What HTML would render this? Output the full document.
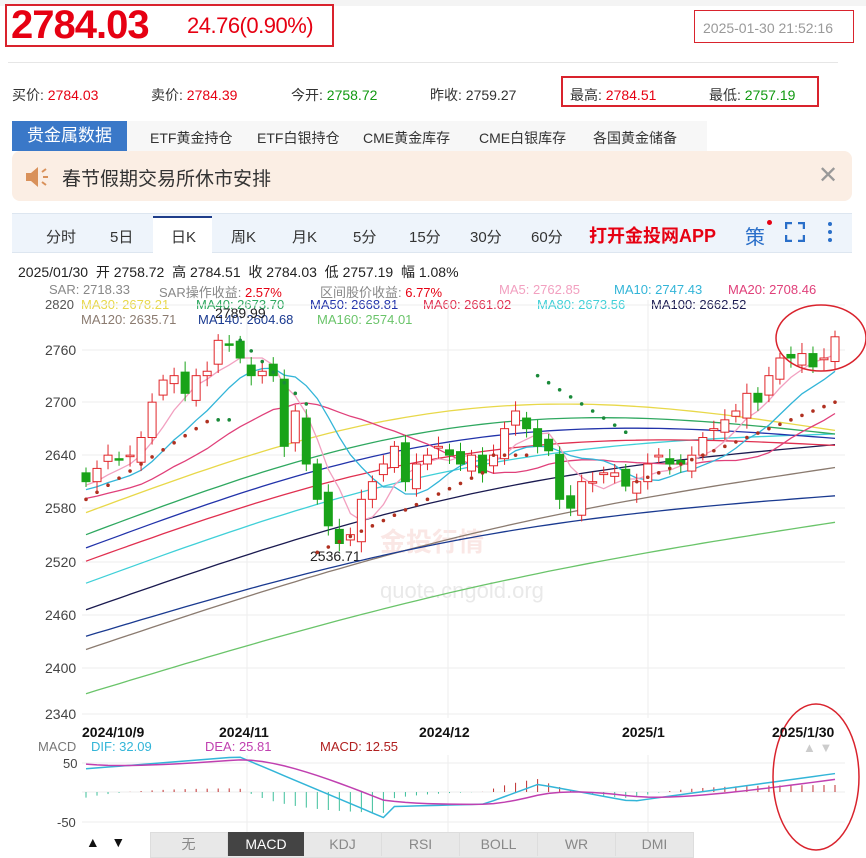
<!DOCTYPE html><html><head><meta charset="utf-8"><style>
body{margin:0;width:866px;height:856px;overflow:hidden;background:#fff;font-family:"Liberation Sans","Noto Sans CJK SC",sans-serif;position:relative}
.a{position:absolute;white-space:nowrap}
.box{position:absolute;border:2px solid #d9232d}
</style></head><body>
<div class="a" style="left:0;top:0;width:866px;height:6px;background:#f4f4f4"></div>
<div class="box" style="left:5px;top:4px;width:325px;height:39px"></div>
<div class="a" style="left:11px;top:3px;font-size:40px;font-weight:bold;color:#e60012;letter-spacing:-1px">2784.03</div>
<div class="a" style="left:187px;top:13px;font-size:22px;color:#e60012;letter-spacing:-0.5px">24.76(0.90%)</div>
<div class="box" style="left:694px;top:10px;width:158px;height:31px;border-width:1.5px"></div>
<div class="a" style="left:703px;top:20px;font-size:14px;color:#999">2025-01-30 21:52:16</div>
<div class="a" style="left:8px;top:62px;width:830px;height:1px;background:#e6e6e6"></div>
<div class="a" style="left:12px;top:85px;font-size:14px;color:#333">买价: <span style="color:#e60012">2784.03</span></div>
<div class="a" style="left:151px;top:85px;font-size:14px;color:#333">卖价: <span style="color:#e60012">2784.39</span></div>
<div class="a" style="left:291px;top:85px;font-size:14px;color:#333">今开: <span style="color:#119911">2758.72</span></div>
<div class="a" style="left:430px;top:85px;font-size:14px;color:#333">昨收: 2759.27</div>
<div class="box" style="left:561px;top:76px;width:254px;height:27px"></div>
<div class="a" style="left:570px;top:85px;font-size:14px;color:#333">最高: <span style="color:#e60012">2784.51</span></div>
<div class="a" style="left:709px;top:85px;font-size:14px;color:#333">最低: <span style="color:#119911">2757.19</span></div>
<div class="a" style="left:12px;top:121px;width:115px;height:30px;background:#3a78c8;color:#fff;font-size:17px;line-height:30px;text-align:center">贵金属数据</div>
<div class="a" style="left:127px;top:121px;width:580px;height:30px;background:#f7f7f7"></div>
<div class="a" style="left:150px;top:128px;font-size:14px;color:#333">ETF黄金持仓</div>
<div class="a" style="left:257px;top:128px;font-size:14px;color:#333">ETF白银持仓</div>
<div class="a" style="left:363px;top:128px;font-size:14px;color:#333">CME黄金库存</div>
<div class="a" style="left:479px;top:128px;font-size:14px;color:#333">CME白银库存</div>
<div class="a" style="left:593px;top:128px;font-size:14px;color:#333">各国黄金储备</div>
<div class="a" style="left:12px;top:151px;width:840px;height:50px;background:#fbeee4;border-radius:8px"></div>
<svg class="a" style="left:24px;top:165px" width="28" height="24"><path d="M2 8h5l7-6v20l-7-6H2z" fill="#d9915a"/><path d="M18 7l4-3M19 12h5M18 17l4 3" stroke="#d9915a" stroke-width="2"/></svg>
<div class="a" style="left:62px;top:164px;font-size:19px;color:#333">春节假期交易所休市安排</div>
<div class="a" style="left:818px;top:161px;font-size:24px;color:#999">✕</div>
<div class="a" style="left:12px;top:213px;width:840px;height:38px;background:#eef4fb;border-top:1px solid #dde6f0;border-bottom:1px solid #dde6f0"></div>
<div class="a" style="left:153px;top:216px;width:59px;height:36px;background:#fff;border-top:2px solid #1e3d8a"></div>
<div class="a" style="left:46px;top:226px;font-size:15px;color:#333">分时</div>
<div class="a" style="left:110px;top:226px;font-size:15px;color:#333">5日</div>
<div class="a" style="left:171px;top:226px;font-size:15px;color:#333">日K</div>
<div class="a" style="left:231px;top:226px;font-size:15px;color:#333">周K</div>
<div class="a" style="left:292px;top:226px;font-size:15px;color:#333">月K</div>
<div class="a" style="left:353px;top:226px;font-size:15px;color:#333">5分</div>
<div class="a" style="left:409px;top:226px;font-size:15px;color:#333">15分</div>
<div class="a" style="left:470px;top:226px;font-size:15px;color:#333">30分</div>
<div class="a" style="left:531px;top:226px;font-size:15px;color:#333">60分</div>
<div class="a" style="left:589px;top:222px;font-size:18px;font-weight:bold;color:#e60012">打开金投网APP</div>
<div class="a" style="left:745px;top:221px;font-size:20px;color:#2a6fc9">策</div>
<div class="a" style="left:767px;top:220px;width:5px;height:5px;border-radius:50%;background:#e60012"></div>
<svg class="a" style="left:785px;top:222px" width="20" height="20"><path d="M1 7V1h6M13 1h6v6M19 13v6h-6M7 19H1v-6" fill="none" stroke="#2a6fc9" stroke-width="2.5"/></svg>
<svg class="a" style="left:826px;top:221px" width="8" height="22"><circle cx="4" cy="3" r="2" fill="#2a6fc9"/><circle cx="4" cy="11" r="2" fill="#2a6fc9"/><circle cx="4" cy="19" r="2" fill="#2a6fc9"/></svg>
<div class="a" style="left:18px;top:262px;font-size:14px;color:#222">2025/01/30 &nbsp;开 2758.72 &nbsp;高 2784.51 &nbsp;收 2784.03 &nbsp;低 2757.19 &nbsp;幅 1.08%</div>
<div class="a" style="font-size:13px;top:282px;left:49px;color:#888">SAR: 2718.33</div>
<div class="a" style="font-size:13px;top:282px;left:159px;color:#888">SAR操作收益: <span style="color:#e60012">2.57%</span></div>
<div class="a" style="font-size:13px;top:282px;left:320px;color:#888">区间股价收益: <span style="color:#e60012">6.77%</span></div>
<div class="a" style="font-size:13px;top:282px;left:499px;color:#f2a0c0">MA5: 2762.85</div>
<div class="a" style="font-size:13px;top:282px;left:614px;color:#33b5d8">MA10: 2747.43</div>
<div class="a" style="font-size:13px;top:282px;left:728px;color:#e0407a">MA20: 2708.46</div>
<div class="a" style="font-size:13px;top:297px;left:45px;color:#555">2820</div>
<div class="a" style="font-size:13px;top:297px;left:81px;color:#e8d84a">MA30: 2678.21</div>
<div class="a" style="font-size:13px;top:297px;left:196px;color:#2fa860">MA40: 2673.70</div>
<div class="a" style="font-size:13px;top:297px;left:310px;color:#2233aa">MA50: 2668.81</div>
<div class="a" style="font-size:13px;top:297px;left:423px;color:#e03050">MA60: 2661.02</div>
<div class="a" style="font-size:13px;top:297px;left:537px;color:#40d0d8">MA80: 2673.56</div>
<div class="a" style="font-size:13px;top:297px;left:651px;color:#1a1a50">MA100: 2662.52</div>
<div class="a" style="font-size:13px;top:312px;left:81px;color:#8b7b70">MA120: 2635.71</div>
<div class="a" style="font-size:13px;top:312px;left:198px;color:#1a3a90">MA140: 2604.68</div>
<div class="a" style="font-size:13px;top:312px;left:317px;color:#6ac46a">MA160: 2574.01</div>
<div class="a" style="font-size:14px;top:305px;left:215px;color:#222">2789.99</div>
<div class="a" style="font-size:14px;top:548px;left:310px;color:#222">2536.71</div>
<div class="a" style="font-size:14px;color:#444;left:45px;top:342px">2760</div>
<div class="a" style="font-size:14px;color:#444;left:45px;top:394px">2700</div>
<div class="a" style="font-size:14px;color:#444;left:45px;top:447px">2640</div>
<div class="a" style="font-size:14px;color:#444;left:45px;top:500px">2580</div>
<div class="a" style="font-size:14px;color:#444;left:45px;top:554px">2520</div>
<div class="a" style="font-size:14px;color:#444;left:45px;top:607px">2460</div>
<div class="a" style="font-size:14px;color:#444;left:45px;top:660px">2400</div>
<div class="a" style="font-size:14px;color:#444;left:45px;top:706px">2340</div>
<div class="a" style="font-size:26px;font-weight:bold;color:rgba(230,120,110,0.18);left:380px;top:522px">金投行情</div>
<div class="a" style="font-size:22px;color:rgba(200,200,200,0.4);left:380px;top:578px">quote.cngold.org</div>
<svg id="ch" class="a" style="left:0;top:0" width="866" height="856"></svg>
<div class="a" style="font-size:14px;font-weight:bold;color:#111;left:82px;top:724px">2024/10/9</div>
<div class="a" style="font-size:14px;font-weight:bold;color:#111;left:219px;top:724px">2024/11</div>
<div class="a" style="font-size:14px;font-weight:bold;color:#111;left:419px;top:724px">2024/12</div>
<div class="a" style="font-size:14px;font-weight:bold;color:#111;left:622px;top:724px">2025/1</div>
<div class="a" style="font-size:14px;font-weight:bold;color:#111;left:772px;top:724px">2025/1/30</div>
<div class="a" style="font-size:13px;left:38px;top:739px;color:#777">MACD</div>
<div class="a" style="font-size:13px;left:91px;top:739px;color:#33b5d8">DIF: 32.09</div>
<div class="a" style="font-size:13px;left:205px;top:739px;color:#c040b0">DEA: 25.81</div>
<div class="a" style="font-size:13px;left:320px;top:739px;color:#b02020">MACD: 12.55</div>
<div class="a" style="font-size:13px;left:803px;top:740px;color:#ccc">▲ ▼</div>
<div class="a" style="font-size:13px;left:63px;top:756px;color:#444">50</div>
<div class="a" style="font-size:13px;left:57px;top:815px;color:#444">-50</div>
<div class="a" style="left:82px;top:834px;font-size:14px;color:#111">&nbsp;▲ &nbsp; ▼</div>
<div class="a" style="left:150px;top:832px;width:542px;height:24px;background:#e8e8e8;border:1px solid #ddd"></div>
<div class="a" style="left:150px;top:832px;height:24px;display:flex;font-size:14px;color:#888;line-height:24px;text-align:center">
<div style="width:77px;border-right:1px solid #ddd">无</div>
<div style="width:76px;background:#444;color:#fff">MACD</div>
<div style="width:77px;border-right:1px solid #ddd">KDJ</div>
<div style="width:77px;border-right:1px solid #ddd">RSI</div>
<div style="width:77px;border-right:1px solid #ddd">BOLL</div>
<div style="width:77px;border-right:1px solid #ddd">WR</div>
<div style="width:77px;border-right:1px solid #ddd">DMI</div></div>
<script>
var s=document.getElementById('ch'),h='';
function Y(p){return 305+(2820-p)*0.8833}
[305,350,402,455,508,562,615,668,714].forEach(function(y){h+='<line x1="82" x2="845" y1="'+y+'" y2="'+y+'" stroke="#eee"/>'});
[247,448,648].forEach(function(x){h+='<line x1="'+x+'" x2="'+x+'" y1="300" y2="718" stroke="#eee"/><line x1="'+x+'" x2="'+x+'" y1="755" y2="832" stroke="#eee"/>'});
[763,792,822].forEach(function(y){h+='<line x1="82" x2="845" y1="'+y+'" y2="'+y+'" stroke="#eee"/>'});
var c=[2620,2635,2650,2645,2650,2670,2710,2735,2740,2720,2740,2745,2780,2775,2760,2740,2745,2740,2660,2700,2640,2600,2570,2550,2560,2600,2620,2640,2660,2620,2640,2650,2660,2650,2640,2650,2630,2650,2680,2700,2680,2660,2655,2600,2590,2620,2620,2630,2630,2615,2620,2640,2650,2640,2640,2650,2670,2680,2690,2700,2720,2710,2740,2760,2760,2765,2750,2760,2784];
var n=c.length,dx=(835-86)/(n-1),X=function(i){return 86+i*dx};
var pre=[];for(var k=0;k<30;k++)pre.push(2560+k*2);
var all=pre.concat(c);
function ma(p){var pts=[];for(var i=0;i<n;i++){var j=i+pre.length,sm=0;for(var q=0;q<p;q++)sm+=all[j-q];pts.push(X(i).toFixed(1)+','+Y(sm/p).toFixed(1))}return pts.join(' ')}
function lin(a,b,bend,col){var pts=[];for(var i=0;i<n;i++){var t=i/(n-1);pts.push(X(i).toFixed(1)+','+Y(a+(b-a)*t+bend*Math.sin(t*Math.PI)).toFixed(1))}h+='<polyline points="'+pts.join(' ')+'" fill="none" stroke="'+col+'" stroke-width="1.3"/>'}
lin(2380,2574,20,'#6ac46a');lin(2430,2636,25,'#8b7b70');lin(2445,2604,30,'#1a3a90');lin(2475,2662,35,'#1a1a50');
lin(2505,2674,45,'#40d0d8');lin(2530,2661,55,'#e03050');lin(2545,2669,60,'#2233aa');lin(2560,2674,65,'#2fa860');lin(2585,2678,70,'#e8d84a');
h+='<polyline points="'+ma(20)+'" fill="none" stroke="#e0407a" stroke-width="1.3"/>';
h+='<polyline points="'+ma(10)+'" fill="none" stroke="#33b5d8" stroke-width="1.3"/>';
h+='<polyline points="'+ma(5)+'" fill="none" stroke="#f2a0c0" stroke-width="1.3"/>';
for(var i=0;i<n;i++){var o=i?c[i-1]+(((i*7)%5)-2)*4:2630,cl=c[i],up=cl>=o,x=X(i);
var hi=Math.max(o,cl)+6+(i*3%7),lo=Math.min(o,cl)-6-(i*5%7);var col=up?'#e0262a':'#19a319';
h+='<line x1="'+x+'" x2="'+x+'" y1="'+Y(hi)+'" y2="'+Y(lo)+'" stroke="'+col+'"/>';
var t=Y(Math.max(o,cl)),b=Math.max(Y(Math.min(o,cl))-t,1.5);
h+='<rect x="'+(x-4)+'" y="'+t+'" width="8" height="'+b+'" fill="'+(up?'#fff':col)+'" stroke="'+col+'"/>';}
for(var i=0;i<n;i++){var v,col='#b03020';var x=X(i);
if(i<12){v=2600+i*8}else if(i<14){v=2690;col='#1a8a3a'}else if(i<21){v=2780-(i-14)*12;col='#1a8a3a'}else if(i<37){v=2540+(i-21)*6}else if(i<41){v=2650}else if(i<50){v=2740-(i-41)*8;col='#1a8a3a'}else{v=2620+(i-50)*5}
h+='<circle cx="'+x+'" cy="'+Y(v)+'" r="1.8" fill="'+col+'"/>'}
function M(v){return 792-v*0.58}
var dif=[],dea=[];for(var i=0;i<n;i++){
var d=(i<14?40+i*1.5:i<28?60-(i-14)*8:i<37?-25+(i-28)*0.5:i<42?-15+(i-37)*7:i<50?10-(i-42)*3.5:-15+(i-50)*2.6);dif.push(d)}
var e=50;for(var i=0;i<n;i++){e=e*0.8+dif[i]*0.2;dea.push(e)}
var p1=[],p2=[];for(var i=0;i<n;i++){var x=X(i);p1.push(x+','+M(dif[i]));p2.push(x+','+M(dea[i]));
var m=(dif[i]-dea[i])*1.2;h+='<line x1="'+x+'" x2="'+x+'" y1="792" y2="'+M(m)+'" stroke="'+(m>=0?'#c03030':'#3cbf9a')+'"/>'}
h+='<polyline points="'+p1.join(' ')+'" fill="none" stroke="#33b5d8" stroke-width="1.5"/>';
h+='<polyline points="'+p2.join(' ')+'" fill="none" stroke="#c040b0" stroke-width="1.5"/>';
h+='<ellipse cx="821" cy="338" rx="45" ry="33" fill="none" stroke="#d9232d" stroke-width="1.5"/>';
h+='<ellipse cx="816" cy="777" rx="43" ry="73" fill="none" stroke="#d9232d" stroke-width="1.5"/>';
s.innerHTML=h;
</script>
</body></html>
